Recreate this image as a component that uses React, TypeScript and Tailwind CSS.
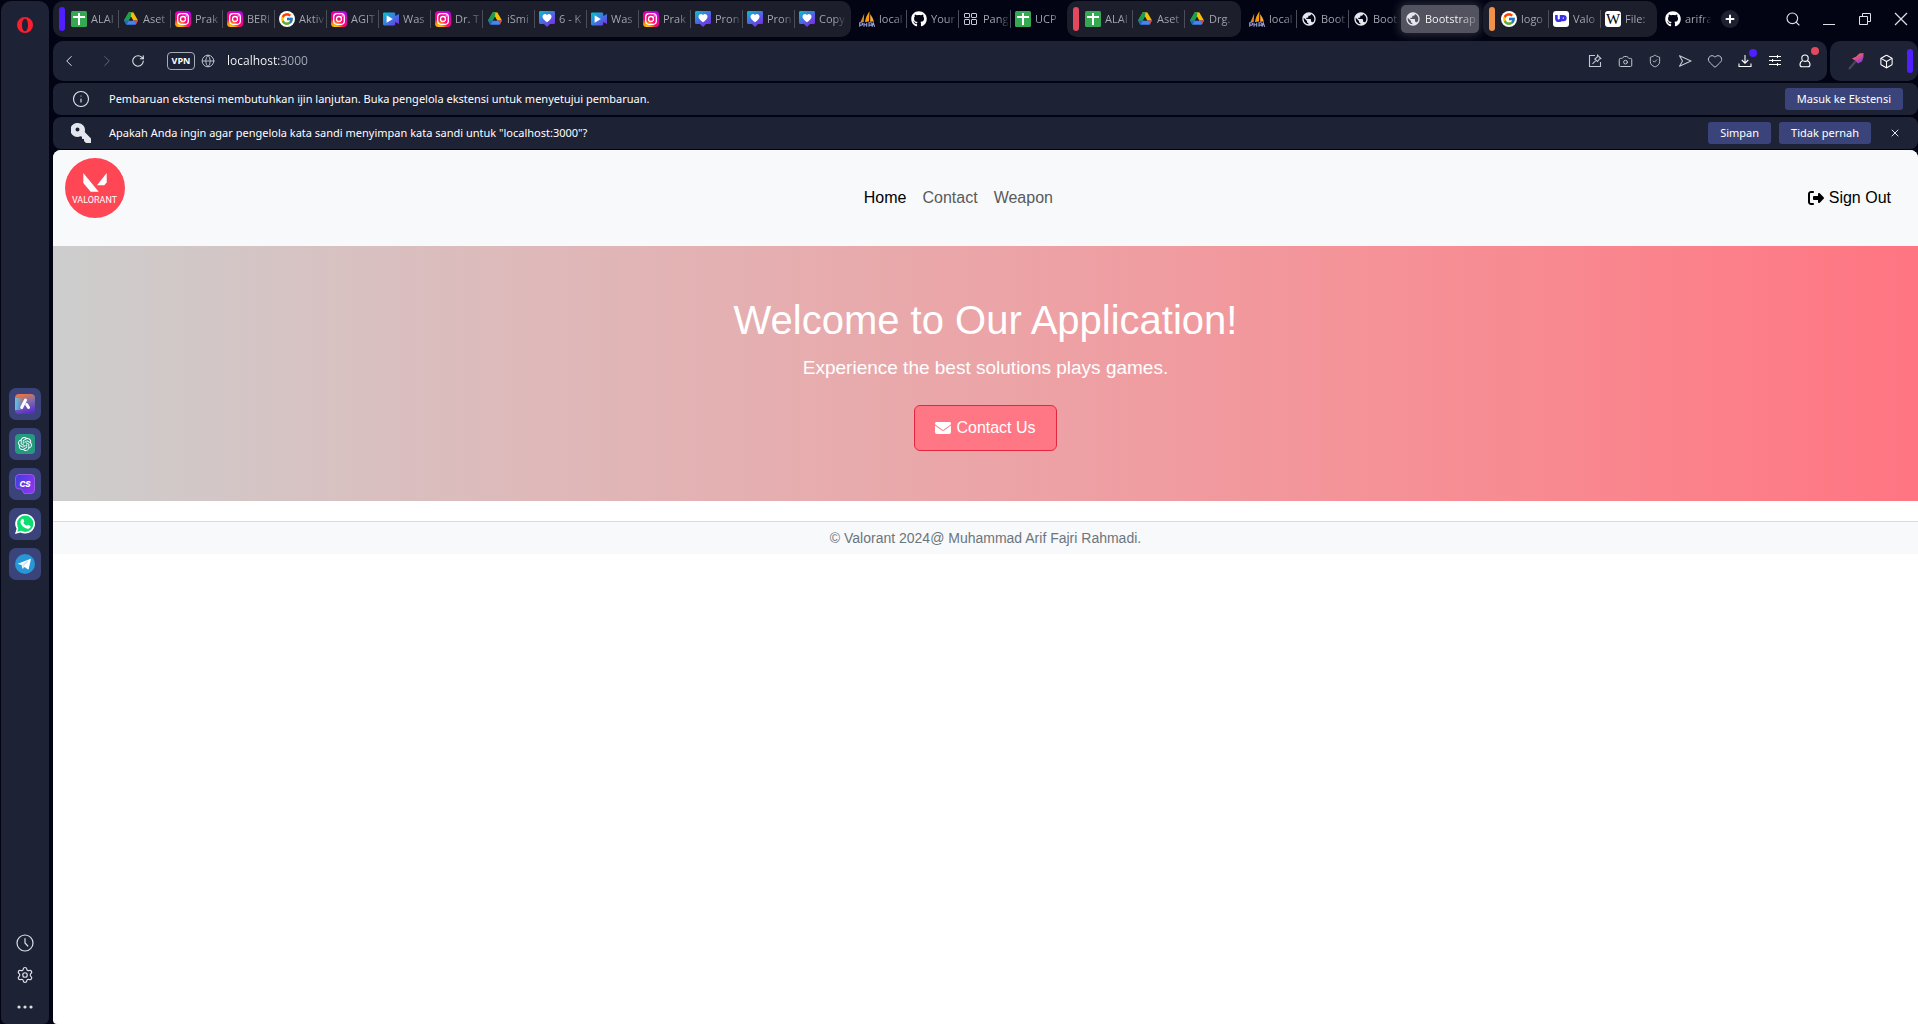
import type { ComponentType, ReactNode } from "react";
import {
  Box,
  Camera,
  ChevronLeft,
  ChevronRight,
  Globe,
  Heart,
  Info,
  Plus,
  RotateCw,
  Search,
  Settings,
  ShieldCheck,
  X,
} from "lucide-react";
import { FcGoogle } from "react-icons/fc";
import { FaGithub } from "react-icons/fa";
import { FaEnvelope, FaRightFromBracket } from "react-icons/fa6";
import { MdPublic } from "react-icons/md";
import { SiOpenai } from "react-icons/si";

/* ---------- Favicons ---------- */

const SheetIcon = () => (
  <svg viewBox="0 0 16 16" className="size-4">
    <rect width="16" height="16" rx="1.5" fill="#34a853" />
    <path d="M7 2h2v12H7zM2 5h12v2H2z" fill="#fff" />
  </svg>
);

const DriveIcon = () => (
  <svg viewBox="0 0 16 16" className="size-4">
    <path d="M5.6 1.5h4.8L8 5.7 3.4 13.8 1 9.6z" fill="#34a853" />
    <path d="M5.6 1.5h4.8L15 9.6h-4.8z" fill="#fbbc04" />
    <path d="M5.6 1.5h2.6L8 5.7 5.8 9.6 1 9.6z" fill="#1e9e4a" />
    <path d="M5.8 9.6H15l-2.4 4.2H3.4z" fill="#4285f4" />
    <path d="M11.2 9.6H15l-2 3.6z" fill="#ea4335" />
    <path d="M1 9.6h4.6l-2.3 4z" fill="#1967d2" />
    <path d="M8 5.9l2.1 3.7H5.9z" fill="#1c1e2b" />
  </svg>
);

const InstaIcon = () => (
  <svg viewBox="0 0 16 16" className="size-4">
    <defs>
      <radialGradient id="insta" cx="0.25" cy="1.05" r="1.1">
        <stop offset="0" stopColor="#ffd600" />
        <stop offset="0.25" stopColor="#ff9a00" />
        <stop offset="0.5" stopColor="#ff0169" />
        <stop offset="0.85" stopColor="#e800b4" />
        <stop offset="1" stopColor="#b900e6" />
      </radialGradient>
    </defs>
    <rect width="16" height="16" rx="3.5" fill="url(#insta)" />
    <rect x="2.7" y="2.7" width="10.6" height="10.6" rx="3.2" fill="none" stroke="#fff" strokeWidth="1.3" />
    <circle cx="8" cy="8" r="2.5" fill="none" stroke="#fff" strokeWidth="1.3" />
    <circle cx="11.1" cy="4.9" r="0.7" fill="#fff" />
  </svg>
);

const GoogleIcon = () => (
  <span className="flex size-4 items-center justify-center rounded-full bg-white">
    <FcGoogle className="size-3.5" />
  </span>
);

const VideoIcon = () => (
  <svg viewBox="0 0 16 16" className="size-4">
    <defs>
      <linearGradient id="video" x1="0" y1="0" x2="1" y2="1">
        <stop offset="0" stopColor="#00c4cc" />
        <stop offset="0.5" stopColor="#3b7be0" />
        <stop offset="1" stopColor="#7d2ae8" />
      </linearGradient>
    </defs>
    <path d="M1.5 1.5h9.300c.9 0 1.400.5 1.400 1.400v2l3.800-2v10.200l-3.800-2v2c0 .9-.5 1.400-1.400 1.400H1.500C.6 14.500 0 14 0 13.100V2.900c0-.9.6-1.400 1.500-1.400z" fill="url(#video)" />
    <path d="M3.6 4.300v7.400L9.800 8z" fill="#fff" />
  </svg>
);

const HeartIcon = () => (
  <svg viewBox="0 0 16 16" className="size-4">
    <defs>
      <linearGradient id="love" x1="0" y1="0" x2="0.7" y2="1">
        <stop offset="0" stopColor="#00c4cc" />
        <stop offset="0.5" stopColor="#4a6ee0" />
        <stop offset="1" stopColor="#7d2ae8" />
      </linearGradient>
    </defs>
    <path d="M1.500 0h13c1 0 1.500.6 1.500 1.500v10c0 1-.6 1.500-1.500 1.500H11l-3 3-3-3H1.500C.5 13 0 12.400 0 11.500v-10C0 .6.600 0 1.500 0z" fill="url(#love)" />
    <path d="M8 11.200C5 9 3.500 7.500 3.500 5.500a2.400 2.400 0 0 1 4.500-1.200 2.400 2.400 0 0 1 4.500 1.200c0 2-1.500 3.500-4.500 5.700z" fill="#fff" />
  </svg>
);

const SailIcon = () => (
  <svg viewBox="0 0 16 16" className="size-4">
    <path d="M5.200 2.500 1.500 11h3.200z" fill="#d98a2b" />
    <path d="M10.500.2C8.300 3.400 6.300 7 6 11l4-.6z" fill="#f89c0e" />
    <path d="M11.200 3c1.500 2.200 3 4.600 3.600 7.400l-3.600.3z" fill="#f7a93b" />
    <path d="M.7 15.800v-4h1.800a1 1 0 0 1 0 2.300H.7M5 11.800v4M5 13.800h2.500M7.700 11.800v4M10 15.800v-4h1.800a1 1 0 0 1 0 2.300H10M13 15.800l1.300-4 1.300 4" stroke="#9c9fd0" strokeWidth="1.1" fill="none" />
  </svg>
);

const GitIcon = () => <FaGithub className="size-4 text-white" />;

const GridIcon = () => (
  <svg viewBox="0 0 16 16" className="size-4" fill="none" stroke="#c9cad2">
    <rect x="1.500" y="2.500" width="5" height="4" rx="0.500" />
    <rect x="8.500" y="2.500" width="5" height="4" rx="0.500" />
    <rect x="1.500" y="8.500" width="5" height="5" rx="0.500" />
    <rect x="8.500" y="8.500" width="5" height="5" rx="0.500" />
  </svg>
);

const WorldIcon = () => <MdPublic className="size-4 text-[#e6e8ef]" />;

const UpIcon = () => (
  <svg viewBox="0 0 16 16" className="size-4">
    <rect width="16" height="16" rx="3" fill="#fff" />
    <path d="M3.400 4v3.400a2.400 2.400 0 0 0 4.800 0V4" fill="none" stroke="#3a30e8" strokeWidth="2.600" />
    <path d="M8.200 10V5.200h2.300a1.900 1.900 0 0 1 0 3.800H8.200" fill="none" stroke="#3a30e8" strokeWidth="2.600" />
  </svg>
);

const WikiIcon = () => (
  <span className="flex size-4 items-center justify-center rounded-[3px] bg-white font-['Liberation_Serif',serif] text-[15px] leading-4 text-black">
    W
  </span>
);

/* ---------- Browser tabs ---------- */

type TabData = { icon: ComponentType; label: string };

const firstGroup: TabData[] = [
  { icon: SheetIcon, label: "ALAI" },
  { icon: DriveIcon, label: "Aset" },
  { icon: InstaIcon, label: "Prak" },
  { icon: InstaIcon, label: "BERI" },
  { icon: GoogleIcon, label: "Aktiv" },
  { icon: InstaIcon, label: "AGIT" },
  { icon: VideoIcon, label: "Was" },
  { icon: InstaIcon, label: "Dr. T" },
  { icon: DriveIcon, label: "iSmi" },
  { icon: HeartIcon, label: "6 - K" },
  { icon: VideoIcon, label: "Was" },
  { icon: InstaIcon, label: "Prak" },
  { icon: HeartIcon, label: "Pron" },
  { icon: HeartIcon, label: "Pron" },
  { icon: HeartIcon, label: "Copy" },
];
const looseTabs: TabData[] = [
  { icon: SailIcon, label: "local" },
  { icon: GitIcon, label: "Your" },
  { icon: GridIcon, label: "Pang" },
  { icon: SheetIcon, label: "UCP" },
];
const secondGroup: TabData[] = [
  { icon: SheetIcon, label: "ALAI" },
  { icon: DriveIcon, label: "Aset" },
  { icon: DriveIcon, label: "Drg." },
];
const localTabs: TabData[] = [
  { icon: SailIcon, label: "local" },
  { icon: WorldIcon, label: "Boot" },
  { icon: WorldIcon, label: "Boot" },
];
const thirdGroup: TabData[] = [
  { icon: GoogleIcon, label: "logo" },
  { icon: UpIcon, label: "Valo" },
  { icon: WikiIcon, label: "File:" },
];

function Tab({ tab, divided }: { tab: TabData; divided: boolean }) {
  const Icon = tab.icon;
  return (
    <button
      type="button"
      className={`flex h-[18px] w-[52px] shrink-0 items-center gap-1 border-r pl-1 ${divided ? "border-[#4b4d59]" : "border-transparent"}`}
    >
      <span className="shrink-0">
        <Icon />
      </span>
      <span className="w-[26px] bg-linear-to-r from-[#a9abb4] from-60% to-[#a9abb4]/10 bg-clip-text text-left text-[11px] leading-4 whitespace-nowrap text-transparent">
        {tab.label}
      </span>
    </button>
  );
}

function TabList({ tabs }: { tabs: TabData[] }) {
  return (
    <div className="flex items-center">
      {tabs.map((tab, i) => (
        <Tab key={i} tab={tab} divided={i < tabs.length - 1} />
      ))}
    </div>
  );
}

function TabGroup({ tabs, bar }: { tabs: TabData[]; bar: string }) {
  return (
    <div className="flex h-9 items-center rounded-[10px] bg-[#1c1e2c] pr-1 pl-1.5">
      <span className={`mr-0.5 h-6 w-1.5 rounded-full ${bar}`} />
      <TabList tabs={tabs} />
    </div>
  );
}

function TabStrip() {
  return (
    <div className="flex h-10 items-start gap-1 pt-px">
      <TabGroup tabs={firstGroup} bar="bg-[#4f1fff]" />
      <div className="flex h-9 items-center">
        <TabList tabs={looseTabs} />
      </div>
      <TabGroup tabs={secondGroup} bar="bg-[#e2495f]" />
      <div className="flex h-9 items-center">
        <TabList tabs={localTabs} />
        <button
          type="button"
          className="flex h-7 w-[78px] items-center gap-1 rounded-[5px] bg-[#52535f] pl-1 shadow-[0_0_8px_2px_rgba(82,83,95,0.5)]"
        >
          <span className="shrink-0">
            <WorldIcon />
          </span>
          <span className="w-[54px] bg-linear-to-r from-white from-60% to-white/10 bg-clip-text text-left text-[11px] leading-4 whitespace-nowrap text-transparent">
            Bootstrap
          </span>
        </button>
      </div>
      <TabGroup tabs={thirdGroup} bar="bg-[#f0914a]" />
      <div className="flex h-9 items-center gap-2">
        <TabList tabs={[{ icon: GitIcon, label: "arifra" }]} />
        <button type="button" aria-label="New tab" className="flex size-[18px] items-center justify-center rounded-full bg-[#1e2030] text-white">
          <Plus className="size-3" strokeWidth={4} />
        </button>
      </div>
      <div className="ml-auto flex h-9 items-center gap-5 pr-[9px] text-[#dfe1e8]">
        <button type="button" aria-label="Search tabs">
          <Search className="size-4" strokeWidth={1.7} />
        </button>
        <button type="button" aria-label="Minimize">
          <svg viewBox="0 0 16 16" className="size-4" stroke="currentColor">
            <path d="M2 13.500h12" />
          </svg>
        </button>
        <button type="button" aria-label="Restore">
          <svg viewBox="0 0 16 16" className="size-4" stroke="currentColor" fill="none">
            <path d="M2.500 5.500h8v8h-8zM5.500 5.500v-3h8v8h-3" />
          </svg>
        </button>
        <button type="button" aria-label="Close window">
          <svg viewBox="0 0 16 16" className="size-4" stroke="currentColor" strokeWidth="1.2">
            <path d="M2 2l12 12M14 2 2 14" />
          </svg>
        </button>
      </div>
    </div>
  );
}

/* ---------- Address bar ---------- */

function ToolButton({ label, dot, children }: { label: string; dot?: string; children: ReactNode }) {
  return (
    <button type="button" aria-label={label} className="relative flex size-[30px] items-center justify-center text-[#c4c7d1]">
      {children}
      {dot && <span className={`absolute size-2 rounded-full ${dot}`} />}
    </button>
  );
}

function AddressBar() {
  return (
    <div className="flex gap-[3px]">
      <div className="flex h-10 flex-1 items-center rounded-[10px] bg-[#1e2235] px-[7px]">
        <button type="button" aria-label="Back" className="text-[#e4e6ec]">
          <ChevronLeft className="size-[18px]" strokeWidth={1.3} />
        </button>
        <button type="button" aria-label="Forward" className="ml-5 text-[#656979]">
          <ChevronRight className="size-[18px]" strokeWidth={1.3} />
        </button>
        <button type="button" aria-label="Reload" className="ml-[15px] text-[#e4e6ec]">
          <RotateCw className="size-3.5" strokeWidth={1.8} />
        </button>
        <button
          type="button"
          className="ml-[22px] flex h-[18px] w-7 items-center justify-center rounded-[4px] border border-[#a9acb8] text-[9px] leading-4 font-bold text-white"
        >
          VPN
        </button>
        <Globe className="ml-1.5 size-3.5 text-[#b9bcc6]" strokeWidth={1.7} />
        <input
          aria-label="Address"
          defaultValue="localhost:3000"
          className="ml-3 min-w-0 flex-1 bg-[linear-gradient(90deg,#ffffff_52px,#a9adbb_52px)] bg-clip-text text-[12px] leading-5 text-transparent outline-none"
        />
        <ToolButton label="Edit page">
          <svg viewBox="0 0 14 14" className="size-3.5" fill="none" stroke="currentColor" strokeWidth="1.1">
            <path d="M7 1.500H1.500v11h11V8" />
            <path d="M9.500 1.200l3.300 3.300-1.300.400-2 2.600L6.800 5l2.500-2zM8 6.300 4.500 9.800" />
          </svg>
        </ToolButton>
        <ToolButton label="Snapshot">
          <Camera className="size-[15px]" strokeWidth={1.6} />
        </ToolButton>
        <ToolButton label="Ad blocker">
          <ShieldCheck className="size-3.5" strokeWidth={1.6} />
        </ToolButton>
        <ToolButton label="Flow">
          <svg viewBox="0 0 14 14" className="size-3.5" fill="none" stroke="currentColor" strokeWidth="1.1" strokeLinejoin="round">
            <path d="M1.500 1.800 13 7 1.500 12.200 4.500 7z" />
          </svg>
        </ToolButton>
        <ToolButton label="Bookmark">
          <Heart className="size-4" strokeWidth={1.5} />
        </ToolButton>
        <ToolButton label="Downloads" dot="top-[3px] right-[3px] bg-[#4f1fff]">
          <svg viewBox="0 0 14 14" className="size-3.5 text-white" fill="none" stroke="currentColor" strokeWidth="1.1">
            <path d="M7 1v8M3.800 6 7 9.200 10.200 6M1 9.500v3h12v-3" />
          </svg>
        </ToolButton>
        <ToolButton label="Easy setup">
          <svg viewBox="0 0 14 14" className="size-3.5 text-white" fill="none" stroke="currentColor">
            <path d="M1 2.500h12M1 6.500h12M1 10.500h12M9.500 1v3M4.500 5v3M9.500 9v3" />
          </svg>
        </ToolButton>
        <ToolButton label="Profile" dot="top-px right-px bg-[#e2495f]">
          <svg viewBox="0 0 14 14" className="size-3.5 text-white" fill="none" stroke="currentColor" strokeWidth="1.1">
            <circle cx="7" cy="4.200" r="3.200" />
            <path d="M4.500 6.800C2.700 7.500 2 9.200 2 10.800c0 1.200.8 2 2 2h6c1.200 0 2-.8 2-2 0-1.600-.7-3.300-2.500-4" />
          </svg>
        </ToolButton>
      </div>
      <div className="flex h-10 w-[88px] items-center rounded-[10px] bg-[#1e2235] pr-[5px] pl-[11px]">
        <ToolButton label="Theme pen">
          <svg viewBox="0 0 18 18" className="size-[18px]">
            <defs>
              <linearGradient id="pen" x1="0" y1="0" x2="0.7" y2="1">
                <stop offset="0" stopColor="#ffb07c" />
                <stop offset="0.5" stopColor="#e0507f" />
                <stop offset="1" stopColor="#7a3be8" />
              </linearGradient>
            </defs>
            <path d="M2 17 8.500 9.500" stroke="#4b465f" strokeWidth="2" />
            <path d="M5 6.500 9 4.800 12.500 1.500 16.500 1v4L15 9.500l-4 2-3-3z" fill="url(#pen)" />
          </svg>
        </ToolButton>
        <ToolButton label="Extensions">
          <Box className="size-[15px] text-white" strokeWidth={1.7} />
        </ToolButton>
        <span className="ml-auto h-6 w-1.5 rounded-full bg-[#4f1fff]" />
      </div>
    </div>
  );
}

/* ---------- Notification bars ---------- */

function Notice({ icon, text, children }: { icon: ReactNode; text: string; children: ReactNode }) {
  return (
    <div className="flex h-8 items-center rounded-[8px] bg-[#1e2235] pr-[15px] pl-[18px] font-['Noto_Sans',sans-serif]">
      <span className="flex w-5 justify-center text-[#e4e6ee]">{icon}</span>
      <p className="ml-[18px] text-[11px] leading-4 text-white">{text}</p>
      <div className="ml-auto flex items-center gap-2">{children}</div>
    </div>
  );
}

function NoticeButton({ children }: { children: ReactNode }) {
  return (
    <button type="button" className="h-[22px] rounded-[3px] bg-[#3a447a] px-3 text-[11px] leading-4 text-white">
      {children}
    </button>
  );
}

/* ---------- Sidebar ---------- */

const AriaIcon = () => (
  <svg viewBox="0 0 20 20" className="size-5">
    <defs>
      <linearGradient id="aria" x1="0.3" y1="0" x2="0.6" y2="1">
        <stop offset="0" stopColor="#f0743c" />
        <stop offset="0.45" stopColor="#7d6fae" />
        <stop offset="1" stopColor="#5a2cc8" />
      </linearGradient>
      <linearGradient id="ariaSide" x1="0" y1="0" x2="1" y2="0">
        <stop offset="0" stopColor="#5cc4ec" />
        <stop offset="0.4" stopColor="#5cc4ec" stopOpacity="0" />
      </linearGradient>
    </defs>
    <rect width="20" height="20" rx="4" fill="url(#aria)" />
    <rect y="4" width="20" height="12" fill="url(#ariaSide)" />
    <path d="M10.500 6 6.700 13.500M11.700 10.500l1.800 3" stroke="#fff" strokeWidth="3" strokeLinecap="round" />
  </svg>
);

const ChatIcon = () => (
  <span className="flex size-5 items-center justify-center rounded-[4px] bg-[#259a80]">
    <SiOpenai className="size-3.5 text-white" />
  </span>
);

const SonicIcon = () => (
  <svg viewBox="0 0 20 20" className="size-5">
    <defs>
      <linearGradient id="sonic" x1="0" y1="0" x2="1" y2="0.6">
        <stop offset="0" stopColor="#3d3fe0" />
        <stop offset="1" stopColor="#8a35f0" />
      </linearGradient>
    </defs>
    <path d="M4 .5h12A3.500 3.500 0 0 1 19.500 4v12a3.500 3.500 0 0 1-3.500 3.500H9L6.500 15H4A3.500 3.500 0 0 1 .5 11.500V4A3.500 3.500 0 0 1 4 .5z" fill="url(#sonic)" stroke="#a95cf0" strokeWidth="0.8" />
    <text x="10" y="13" textAnchor="middle" fill="#fff" fontSize="8" fontWeight="800" fontStyle="italic" fontFamily="Inter, sans-serif">
      CS
    </text>
  </svg>
);

const WhatsIcon = () => (
  <svg viewBox="0 0 20 20" className="size-5">
    <path d="M10.200 0a9.800 9.800 0 1 1-4.700 18.400L0 20l1.600-5.200A9.800 9.800 0 0 1 10.200 0z" fill="#fff" />
    <circle cx="10.200" cy="9.800" r="8.200" fill="#0bdd70" />
    <path d="M2.300 17.700l1.200-4.200 3 3.100z" fill="#0bdd70" />
    <path d="M7.200 4.900c.5-.3 1 0 1.200.4l.8 1.800c.1.500-.8 1.300-.8 1.600.6 1.400 1.800 2.500 3.300 3.100.4 0 1-1 1.400-1l2 .9c.5.300.6.700.4 1.200-.5 1.300-1.700 2-3.200 1.800-3.600-.8-6.400-3.300-6.800-6.600 0-1.400.7-2.600 1.700-3.200z" fill="#fff" />
  </svg>
);

const TeleIcon = () => (
  <svg viewBox="0 0 20 20" className="size-5">
    <circle cx="10" cy="10" r="10" fill="#2797d8" />
    <path d="M2.800 9.800 15 4.900c.6-.2 1 .1.800.9l-2 9c-.2.700-.6.800-1.200.5l-3-2.200-1.500 1.400c-.3.300-.6.200-.7-.2l-.9-3.200-3.500-1.100c-.5-.1-.5-.5-.2-.7z" fill="#fff" />
    <path d="M7.200 11 13 7l-4.600 5-.2 2" stroke="#b5d6ea" strokeWidth="0.8" fill="none" />
  </svg>
);

const sideApps = [
  { name: "Aria", icon: AriaIcon },
  { name: "ChatGPT", icon: ChatIcon },
  { name: "ChatSonic", icon: SonicIcon },
  { name: "WhatsApp", icon: WhatsIcon },
  { name: "Telegram", icon: TeleIcon },
];

function Sidebar() {
  return (
    <aside className="mt-px ml-px flex w-12 shrink-0 flex-col items-center rounded-t-[10px] rounded-b-[6px] bg-[#1e2235] pt-4">
      <button type="button" aria-label="Opera menu">
        <svg viewBox="0 0 16 16" className="size-4">
          <path fillRule="evenodd" d="M8 0a8 8 0 1 1 0 16A8 8 0 0 1 8 0zm0 1.800C6.200 1.800 5 4.500 5 8s1.200 6.200 3 6.200S11 11.500 11 8 9.800 1.800 8 1.800z" fill="#fa1e2e" />
        </svg>
      </button>
      <nav className="my-auto flex flex-col gap-2" aria-label="Apps">
        {sideApps.map(({ name, icon: Icon }) => (
          <button key={name} type="button" aria-label={name} className="flex size-8 items-center justify-center rounded-[7px] bg-[#3a447a]">
            <Icon />
          </button>
        ))}
      </nav>
      <div className="flex flex-col items-center gap-3.5 pb-2 text-[#dcdee6]">
        <button type="button" aria-label="History">
          <svg viewBox="0 0 18 18" className="size-[18px]" fill="none" stroke="currentColor" strokeWidth="1.2" strokeLinecap="round">
            <circle cx="9" cy="9" r="8" />
            <path d="M9 4.500V9l2.800 3" />
          </svg>
        </button>
        <button type="button" aria-label="Settings">
          <Settings className="size-[18px]" strokeWidth={1.6} />
        </button>
        <button type="button" aria-label="More">
          <svg viewBox="0 0 18 18" className="size-[18px]" fill="currentColor">
            <circle cx="3" cy="9" r="1.6" />
            <circle cx="9" cy="9" r="1.6" />
            <circle cx="15" cy="9" r="1.6" />
          </svg>
        </button>
      </div>
    </aside>
  );
}

/* ---------- Web page ---------- */

function ValorantLogo() {
  return (
    <svg viewBox="0 0 60 60" className="size-[60px]" role="img" aria-label="Valorant">
      <circle cx="30" cy="30" r="30" fill="#ff4655" />
      <path d="M18.300 15 33.700 33.700h-8L18.300 25z" fill="#fff" />
      <path d="M41.700 15v9.300l-2.400 3H32z" fill="#fff" />
      <text x="29.500" y="44.700" textAnchor="middle" fill="#fff" fontSize="9" fontWeight="400" fontFamily="Roboto, sans-serif">
        VALORANT
      </text>
    </svg>
  );
}

function WebPage() {
  return (
    <div className="mt-px flex-1 rounded-t-[8px] rounded-bl-[4px] bg-white font-['Liberation_Sans',Arial,sans-serif] text-base">
      <header className="flex items-center justify-between rounded-t-[8px] bg-[#f8f9fb] px-3 py-2">
        <a href="#home" className="h-20">
          <ValorantLogo />
        </a>
        <nav className="flex">
          <a href="#home" className="p-2 text-black">
            Home
          </a>
          <a href="#contact" className="p-2 text-[#595a5b]">
            Contact
          </a>
          <a href="#weapon" className="p-2 text-[#595a5b]">
            Weapon
          </a>
        </nav>
        <button type="button" className="flex items-center gap-[5px] py-2 pr-[15px] pl-4 text-black">
          <FaRightFromBracket className="size-4" />
          Sign Out
        </button>
      </header>
      <section className="bg-linear-to-r from-[#cdcdcd] to-[#ff7582] py-[50px] text-center text-white">
        <h1 className="mb-2 text-[40px] leading-[48px]">Welcome to Our Application!</h1>
        <p className="mb-[21px] text-[19px] leading-8">Experience the best solutions plays games.</p>
        <a
          href="#contact"
          className="mx-auto flex w-fit items-center gap-[5px] rounded-[6px] border border-[#e5263f] bg-[#ff7785] px-5 py-2.5 leading-6"
        >
          <FaEnvelope className="size-4" />
          Contact Us
        </a>
      </section>
      <footer className="mt-5 border-t border-[#d9dcde] bg-[#f8f9fb] py-1.5 text-center text-[14px] leading-5 text-[#6c757d]">
        © Valorant 2024@ Muhammad Arif Fajri Rahmadi.
      </footer>
    </div>
  );
}

export default function App() {
  return (
    <div className="flex min-h-screen gap-1 overflow-hidden bg-[#020414] font-['Open_Sans',sans-serif]">
      <Sidebar />
      <main className="flex min-w-0 flex-1 flex-col">
        <TabStrip />
        <div className="mt-px flex flex-col gap-0.5">
          <AddressBar />
          <Notice
            icon={<Info className="size-[18px]" strokeWidth={1.5} />}
            text="Pembaruan ekstensi membutuhkan ijin lanjutan. Buka pengelola ekstensi untuk menyetujui pembaruan."
          >
            <NoticeButton>Masuk ke Ekstensi</NoticeButton>
          </Notice>
          <Notice
            icon={
              <svg viewBox="0 0 20 20" className="size-5" fill="currentColor">
                <path fillRule="evenodd" d="M7 0a7 7 0 0 1 6.700 9L20 15.500V20h-5l-2-2v-2h-2v-2.300l-1.500-.5A7 7 0 1 1 7 0zm-.5 4.500a2 2 0 1 0 0 4 2 2 0 0 0 0-4z" />
              </svg>
            }
            text={'Apakah Anda ingin agar pengelola kata sandi menyimpan kata sandi untuk "localhost:3000"?'}
          >
            <NoticeButton>Simpan</NoticeButton>
            <NoticeButton>Tidak pernah</NoticeButton>
            <button type="button" aria-label="Dismiss" className="mr-0.5 ml-2.5 text-[#e4e6ee]">
              <X className="size-3" strokeWidth={2} />
            </button>
          </Notice>
        </div>
        <WebPage />
      </main>
    </div>
  );
}
